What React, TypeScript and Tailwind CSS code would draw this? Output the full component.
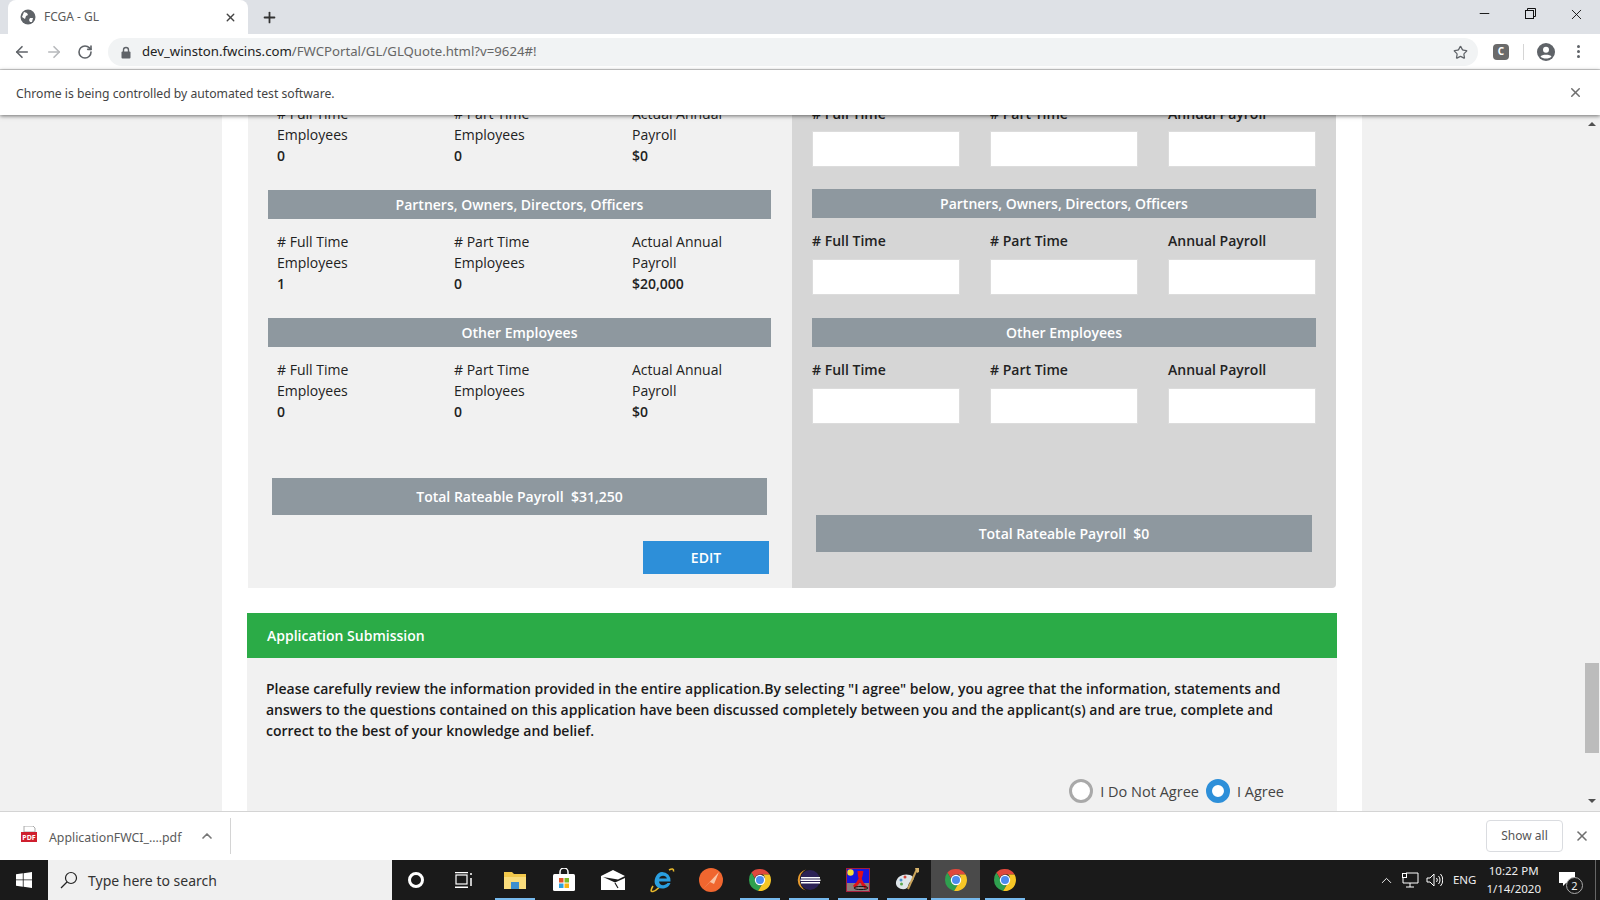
import React from "react";
import { ArrowLeft, ArrowRight, ChevronUp, Minus, Plus, RotateCw, Star, X } from "lucide-react";

const PAGE_FONT = "font-['Open_Sans',sans-serif]";
const CHROME_FONT = "font-['Noto_Sans',sans-serif]";

const ChromeLogo = () => (
  <svg width="24" height="24" viewBox="0 0 24 24">
    <path d="M12 1a11 11 0 0 1 9.600 5.500H12a5.500 5.500 0 0 0-5.200 3.700L3.400 4.400A11 11 0 0 1 12 1z" fill="#e0483c" />
    <path d="M1 12a11 11 0 0 1 2.400-7.600l4 7a5 5 0 0 0 6 5.800l-3.300 5.700A11 11 0 0 1 1 12z" fill="#2fa04f" />
    <path d="M23 12a11 11 0 0 1-12.900 10.900l4.800-8.200a5 5 0 0 0-.1-8.200h6.800A11 11 0 0 1 23 12z" fill="#f6c626" />
    <circle cx="12" cy="12" r="5.200" fill="#fff" />
    <circle cx="12" cy="12" r="4" fill="#4c8bf0" />
  </svg>
);

const FolderIcon = () => (
  <svg width="24" height="22" viewBox="0 0 24 22">
    <path d="M1 3h8l2 2h12v15H1z" fill="#f2c84b" />
    <path d="M1 8h22v12H1z" fill="#f9dc7c" />
    <path d="M8 13h8v7H8z" fill="#3c8fd0" />
  </svg>
);

const StoreIcon = () => (
  <svg width="24" height="24" viewBox="0 0 24 24">
    <path d="M8 6V4a4 4 0 0 1 8 0v2" fill="none" stroke="#fff" strokeWidth="1.500" />
    <rect x="1" y="6" width="22" height="17" rx="1.500" fill="#fff" />
    <rect x="7" y="10" width="4.500" height="4.500" fill="#e2552b" />
    <rect x="12.500" y="10" width="4.500" height="4.500" fill="#7db927" />
    <rect x="7" y="15.500" width="4.500" height="4.500" fill="#2da2e0" />
    <rect x="12.500" y="15.500" width="4.500" height="4.500" fill="#f8b414" />
  </svg>
);

const MailIcon = () => (
  <svg width="24" height="20" viewBox="0 0 24 20">
    <path d="M0 6 12 0l12 6-7 3.500L2 7l12 5.500L24 8v12H0z" fill="#fff" />
    <path d="M14 13l3 5" fill="none" stroke="#1b1b1b" strokeWidth="1.200" />
  </svg>
);

const IeIcon = () => (
  <svg width="26" height="26" viewBox="0 0 26 26">
    <path d="M20 3c3-1.600 5-1.400 4.500 1.500M4 19c-2.500 4-2.500 6 0 5.500 2-.4 4-2 6-4" fill="none" stroke="#e8b92c" strokeWidth="1.600" />
    <path d="M13 5a8.500 8.500 0 0 1 8.500 9.500H10c.3 4 5.500 5 8.500 1.500h3c-2.500 7-13 7.500-15.500 1C4.500 12 8 5 13 5z" fill="#2a9fe0" />
    <path d="M10.200 11.500h7.600c-.4-3.800-7-3.800-7.600 0z" fill="#1b1b1b" />
  </svg>
);

const PostmanIcon = () => (
  <svg width="24" height="24" viewBox="0 0 24 24">
    <circle cx="12" cy="12" r="12" fill="#f0662f" />
    <path d="M5 20 20 4l-5 12-4-2z" fill="#f9c4a4" />
  </svg>
);

const EclipseIcon = () => (
  <svg width="24" height="24" viewBox="0 0 24 24">
    <circle cx="13" cy="12" r="10" fill="#2c2255" />
    <path d="M9 1.500a10.800 10.800 0 0 0 0 21A12 12 0 0 1 9 1.500z" fill="#e79b2e" />
    <path d="M4 9h19v1.500H4zM3.500 11.500h20V13h-20zM4 14h19v1.500H4z" fill="#fff" />
  </svg>
);

const XmindIcon = () => (
  <svg width="24" height="24" viewBox="0 0 24 24">
    <rect x="0.500" y="0.500" width="23" height="23" fill="#1616e0" stroke="#a51d3c" />
    <circle cx="4.500" cy="4.500" r="3.200" fill="#f4e03a" />
    <rect x="1" y="15" width="22" height="8" fill="#8b7d7b" />
    <path d="M8 19C14 14 15 9 16 3M13 3c0 8 3 13 7 17" fill="none" stroke="#e0101a" strokeWidth="3" />
    <ellipse cx="15" cy="20" rx="7" ry="1.600" fill="none" stroke="#111" />
  </svg>
);

const PaintIcon = () => (
  <svg width="24" height="24" viewBox="0 0 24 24">
    <path d="M1 14C2 8 9 5 15 7c5 2 4 6 1 7-3 .5-2 4-4 6-4 3-12 0-11-6z" fill="#dfe6ea" />
    <circle cx="6" cy="12" r="1.500" fill="#4a8fd0" />
    <circle cx="10" cy="9" r="1.500" fill="#d2453a" />
    <circle cx="6.500" cy="16" r="1.500" fill="#5aa84f" />
    <path d="M22 1 13 21" stroke="#c9a35a" strokeWidth="2" />
    <path d="M20 0h4v4l-2 1z" fill="#d8b46c" />
  </svg>
);

const WindowsIcon = () => (
  <svg width="16" height="16" viewBox="0 0 16 16" fill="#fff">
    <path d="M0 2.300 6.800 1.300v6.200H0zM7.600 1.200 16 0v7.500H7.600zM0 8.300h6.800v6.400L0 13.700zM7.600 8.300H16V16l-8.400-1.200z" />
  </svg>
);

const taskbarApps = [
  { icon: <FolderIcon />, bar: "w-10" },
  { icon: <StoreIcon />, bar: "" },
  { icon: <MailIcon />, bar: "" },
  { icon: <IeIcon />, bar: "" },
  { icon: <PostmanIcon />, bar: "" },
  { icon: <ChromeLogo />, bar: "w-10" },
  { icon: <EclipseIcon />, bar: "w-10" },
  { icon: <XmindIcon />, bar: "w-10" },
  { icon: <PaintIcon />, bar: "w-10" },
  { icon: <ChromeLogo />, bar: "w-full", active: true },
  { icon: <ChromeLogo />, bar: "w-10" },
];

const TabStrip = () => (
  <div className="h-[34px] bg-[#dee1e6] flex items-end pl-2 relative">
    <div className={`${CHROME_FONT} w-[240px] h-[34px] bg-white rounded-t-lg flex items-center pl-3 pr-[11px] text-[12px] text-[#5a5a5a]`}>
      <svg width="16" height="16" viewBox="0 0 16 16" className="mr-2 shrink-0">
        <circle cx="8" cy="8" r="7.500" fill="#5f6368" />
        <path d="M4 3l3 1 1 2-2 1-1 3-3-2zM10 9l3 0-1 4-2 0-1-2z" fill="#fff" />
      </svg>
      <span className="flex-1">FCGA - GL</span>
      <X size={13} strokeWidth={2.5} className="text-[#444]" />
    </div>
    <div className="h-[34px] flex items-center ml-[13px]">
      <Plus size={17} strokeWidth={2.5} className="text-[#333]" />
    </div>
    <div className="ml-auto h-full flex items-start pt-1.5">
      <div className="w-[46px] flex justify-center"><Minus size={15} strokeWidth={1.4} className="text-black" /></div>
      <div className="w-[46px] flex justify-center pt-0.5">
        <svg width="11" height="11" viewBox="0 0 11 11" fill="none" stroke="#111">
          <rect x="0.500" y="2.500" width="8" height="8" />
          <path d="M2.500 2.500v-2h8v8h-2" />
        </svg>
      </div>
      <div className="w-[46px] flex justify-center mr-[1px]"><X size={17} strokeWidth={1.2} className="text-black" /></div>
    </div>
  </div>
);

const Toolbar = () => (
  <div className="h-9 bg-white flex items-center border-b border-[#d4d4d4]">
    <div className="w-[108px] flex items-center pl-[13px] gap-[14px] shrink-0">
      <ArrowLeft size={18} strokeWidth={2.2} className="text-[#5f6368]" />
      <ArrowRight size={18} strokeWidth={2.2} className="text-[#b7b9bc]" />
      <RotateCw size={16} strokeWidth={2.4} className="text-[#5f6368]" />
    </div>
    <div className={`${CHROME_FONT} w-[1370px] h-7 mt-px rounded-full bg-[#f1f3f4] flex items-center pl-3 pr-[10px] text-[13.200px]`}>
      <svg width="12" height="13" viewBox="0 0 12 13" className="mr-[10px]">
        <path d="M3.500 6V4a2.500 2.500 0 0 1 5 0v2" fill="none" stroke="#5f6368" strokeWidth="1.400" />
        <rect x="1.500" y="5.500" width="9" height="7" rx="1" fill="#5f6368" />
      </svg>
      <span className="text-[#222]">dev_winston.fwcins.com</span>
      <span className="text-[#666]">/FWCPortal/GL/GLQuote.html?v=9624#!</span>
      <Star size={15} strokeWidth={2} className="ml-auto text-[#5f6368]" />
    </div>
    <div className="flex items-center flex-1 pl-[15px]">
      <div className="w-4 h-4 rounded-sm bg-[#6a6a6a] text-white text-[10px] font-bold flex items-center justify-center">C</div>
      <div className="w-px h-4 bg-[#d5d5d5] ml-[14px]" />
      <svg width="18" height="18" viewBox="0 0 18 18" className="ml-[13px]">
        <circle cx="9" cy="9" r="9" fill="#5f6368" />
        <circle cx="9" cy="6.800" r="3" fill="#fff" />
        <path d="M3.500 13.500c1-2.500 10-2.500 11 0-2.500 2.800-8.500 2.800-11 0z" fill="#fff" />
      </svg>
      <div className="flex flex-col gap-[2px] ml-[22px]">
        <span className="w-[3px] h-[3px] rounded-full bg-[#5f6368]" />
        <span className="w-[3px] h-[3px] rounded-full bg-[#5f6368]" />
        <span className="w-[3px] h-[3px] rounded-full bg-[#5f6368]" />
      </div>
    </div>
  </div>
);

const InfoBar = () => (
  <div className="h-[45px] bg-white flex items-center pl-4 pr-[17px] relative z-10 shadow-[0_1px_4px_rgba(0,0,0,0.55)]">
    <span className={`${CHROME_FONT} pt-[3px] text-[12.200px] text-[#444]`}>Chrome is being controlled by automated test software.</span>
    <X size={15} strokeWidth={2.4} className="ml-auto text-[#6f6f6f]" />
  </div>
);

const SectionHeader = ({ title, className = "" }: { title: string; className?: string }) => (
  <div className={`h-[29px] bg-[#8e989f] text-white text-[14px] font-semibold flex items-center justify-center ${className}`}>
    {title}
  </div>
);

const ReadOnlyRow = ({ first, part, payroll }: { first: string; part: string; payroll: string }) => (
  <div className="grid grid-cols-[177px_178px_1fr] pl-[9px] text-[14px] leading-[21px] text-[#222]">
    <div>
      <div># Full Time</div>
      <div>Employees</div>
      <div className="font-semibold">{first}</div>
    </div>
    <div>
      <div># Part Time</div>
      <div>Employees</div>
      <div className="font-semibold">{part}</div>
    </div>
    <div>
      <div>Actual Annual</div>
      <div>Payroll</div>
      <div className="font-semibold">{payroll}</div>
    </div>
  </div>
);

const InputRow = ({ gap = "mt-[7px]" }: { gap?: string }) => (
  <div>
    <div className="grid grid-cols-[178px_178px_1fr] text-[14px] leading-[21px] font-semibold text-[#222]">
      <div># Full Time</div>
      <div># Part Time</div>
      <div>Annual Payroll</div>
    </div>
    <div className={`grid grid-cols-[178px_178px_1fr] ${gap}`}>
      <div className="w-[148px] h-9 bg-white border border-[#dcdcdc]" />
      <div className="w-[148px] h-9 bg-white border border-[#dcdcdc]" />
      <div className="w-[148px] h-9 bg-white border border-[#dcdcdc]" />
    </div>
  </div>
);

const PayrollPanels = () => (
  <div className="flex -mt-3">
    <div className="w-[544px] h-[485px] bg-[#f1f1f1] pl-5 pr-[21px] flex flex-col">
      <ReadOnlyRow first="0" part="0" payroll="$0" />
      <SectionHeader title="Partners, Owners, Directors, Officers" className="mt-6" />
      <div className="mt-3"><ReadOnlyRow first="1" part="0" payroll="$20,000" /></div>
      <SectionHeader title="Other Employees" className="mt-6" />
      <div className="mt-3"><ReadOnlyRow first="0" part="0" payroll="$0" /></div>
      <div className="mt-14 mx-1 h-[37px] bg-[#8e989f] text-white text-[14px] font-semibold flex items-center justify-center">
        Total Rateable Payroll&nbsp;&nbsp;$31,250
      </div>
      <button className="mt-[26px] self-end mr-[2px] w-[126px] h-[33px] bg-[#2d8fd9] text-white text-[14px] font-semibold">EDIT</button>
    </div>
    <div className="w-[544px] h-[485px] bg-[#d6d6d6] rounded-br pl-5 pr-5 flex flex-col">
      <InputRow />
      <SectionHeader title="Partners, Owners, Directors, Officers" className="mt-[22px]" />
      <div className="mt-3"><InputRow gap="mt-2" /></div>
      <SectionHeader title="Other Employees" className="mt-[23px]" />
      <div className="mt-3"><InputRow gap="mt-2" /></div>
      <div className="mt-[91px] mx-1 h-[37px] bg-[#8e989f] text-white text-[14px] font-semibold flex items-center justify-center">
        Total Rateable Payroll&nbsp;&nbsp;$0
      </div>
    </div>
  </div>
);

const Submission = () => (
  <div className="mt-[25px] w-[1090px] -ml-px">
    <div className="h-[45px] bg-[#2bab47] text-white text-[14px] font-semibold flex items-center pl-5">Application Submission</div>
    <div className="h-[200px] bg-[#f1f1f1] pl-[19px] pt-5 text-[14px] leading-[21px] font-semibold text-[#1a1a1a]">
      <p className="w-[1030px]">
        Please carefully review the information provided in the entire application.By selecting "I agree" below, you agree that the information, statements and answers to the questions contained on this application have been discussed completely between you and the applicant(s) and are true, complete and correct to the best of your knowledge and belief.
      </p>
      <div className="mt-[38px] flex items-center justify-end pr-[53px] font-normal text-[#444] text-[14.500px]">
        <span className="w-6 h-6 rounded-full bg-white border-[3px] border-[#a9a9a9]" />
        <span className="ml-[7px]">I Do Not Agree</span>
        <span className="ml-[7px] w-6 h-6 rounded-full bg-white border-[6px] border-[#2d8fd9]" />
        <span className="ml-[7px]">I Agree</span>
      </div>
    </div>
  </div>
);

const Scrollbar = () => (
  <div className="w-[17px] ml-auto flex flex-col items-center relative">
    <div className="mt-[7px] w-0 h-0 border-x-4 border-x-transparent border-b-[4px] border-b-[#505050]" />
    <div className="mt-[537px] w-[14px] h-[90px] bg-[#bcbcbc]" />
    <div className="mt-[46px] w-0 h-0 border-x-4 border-x-transparent border-t-[4px] border-t-[#505050]" />
  </div>
);

const DownloadBar = () => (
  <div className={`${CHROME_FONT} h-[49px] bg-white border-t border-[#d4d4d4] flex items-center`}>
    <svg width="18" height="18" viewBox="0 0 18 18" className="ml-5 -mt-[3px]">
      <path d="M4 0h9l2 2v4H4z" fill="#fff" stroke="#aaa" />
      <rect x="1" y="6" width="16" height="10" fill="#cf1f2e" />
      <text x="9" y="14" textAnchor="middle" fontSize="7" fontWeight="700" fill="#fff">PDF</text>
    </svg>
    <span className="ml-[11px] pt-[5px] text-[12.300px] text-[#5a5a5a]">ApplicationFWCI_....pdf</span>
    <ChevronUp size={16} strokeWidth={2.5} className="ml-[18px] text-[#777]" />
    <div className="w-px h-9 bg-[#d4d4d4] ml-[15px]" />
    <button className="ml-auto w-[77px] h-[32px] rounded border border-[#dadce0] text-[12px] text-[#555]">Show all</button>
    <X size={16} strokeWidth={2.4} className="ml-[11px] mr-[10px] text-[#6f6f6f]" />
  </div>
);

const Taskbar = () => (
  <div className="h-10 bg-[#1a1a1a] flex items-stretch text-white">
    <div className="w-12 flex items-center justify-center"><WindowsIcon /></div>
    <div className={`${CHROME_FONT} w-[344px] bg-[#f0f0f0] flex items-center pl-[12px] text-[14px] text-[#333]`}>
      <svg width="18" height="18" viewBox="0 0 18 18" fill="none" stroke="#222" strokeWidth="1.200">
        <circle cx="11" cy="7" r="5.500" />
        <path d="M7 11 1 17" />
      </svg>
      <span className="ml-[10px]">Type here to search</span>
    </div>
    <div className="w-[47px] flex items-center justify-center">
      <span className="w-4 h-4 rounded-full border-[3px] border-white" />
    </div>
    <div className="w-[51px] flex items-center justify-center pr-[2px]">
      <svg width="18" height="16" viewBox="0 0 18 16" fill="none" stroke="#fff" strokeWidth="1.200">
        <rect x="1" y="3" width="11" height="9" />
        <path d="M0 0.600h13M0 15.300h13M16 1v2M16 6v8" strokeWidth="1.500" />
      </svg>
    </div>
    {taskbarApps.map((app, i) => (
      <div key={i} className={`w-[49px] flex items-center justify-center relative ${app.active ? "bg-[#4a4a4a]" : ""}`}>
        {app.icon}
        {app.bar && <span className={`absolute bottom-0 h-[2px] bg-[#76b9ed] ${app.bar}`} />}
      </div>
    ))}
    <div className={`${CHROME_FONT} flex-1 flex items-center justify-end text-[11.500px] text-[#eee]`}>
      <ChevronUp size={17} strokeWidth={1.4} className="mr-[7px]" />
      <svg width="17" height="16" viewBox="0 0 17 16" fill="none" stroke="#fff" strokeWidth="1" className="mr-[7px]">
        <path d="M4 1h12v10H1V6M8 11v4M4 15h8" />
        <rect x="0.500" y="1.500" width="4" height="4" />
      </svg>
      <svg width="17" height="14" viewBox="0 0 17 14" fill="none" stroke="#fff" strokeWidth="1" className="mr-[10px]">
        <path d="M1 5h3l4-4v12L4 9H1zM10.500 5a3 3 0 0 1 0 4M12.500 3a6 6 0 0 1 0 8M14.500 1a9 9 0 0 1 0 12" />
      </svg>
      <span className="mr-[10px]">ENG</span>
      <div className="text-center leading-[18px] mr-[18px]">
        <div>10:22 PM</div>
        <div>1/14/2020</div>
      </div>
      <div className="relative w-5 h-4 mr-4">
        <svg width="17" height="15" viewBox="0 0 17 15" fill="#fff">
          <path d="M0 0h16v11H7l-3 3v-3H0z" />
        </svg>
        <span className="absolute -right-1 top-[5px] w-[17px] h-[17px] rounded-full bg-[#1a1a1a] border border-[#aaa] text-[11px] leading-[15px] text-center">2</span>
      </div>
      <div className="w-px h-full bg-[#666] mr-1" />
    </div>
  </div>
);

export default function App() {
  return (
    <div className="w-[1600px] h-[900px] flex flex-col overflow-hidden bg-white">
      <TabStrip />
      <Toolbar />
      <InfoBar />
      <div className="flex-1 min-h-0 flex bg-[#f1f1f1] overflow-hidden">
        <div className={`${PAGE_FONT} ml-[222px] w-[1140px] bg-white pl-[26px] overflow-hidden`}>
          <PayrollPanels />
          <Submission />
        </div>
        <Scrollbar />
      </div>
      <DownloadBar />
      <Taskbar />
    </div>
  );
}
